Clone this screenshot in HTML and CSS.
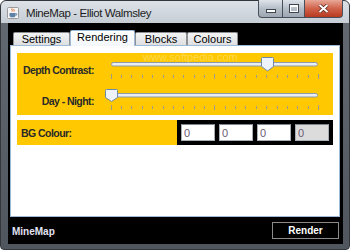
FILE: index.html
```html
<!DOCTYPE html>
<html>
<head>
  <meta charset="UTF-8">
  <title>MineMap</title>
  <link rel="stylesheet" href="styles.css">
</head>
<body>
<div class="window">
  <div class="titlebar">
    <svg class="appicon" width="12" height="12" viewBox="0 0 12 12">
      <rect x="0.5" y="0.5" width="11" height="11" rx="1" fill="#f4f4f4" stroke="#9a9a9a"/>
      <path d="M5 1.5c-1 1 1 1.6 0 3M7 2c-.8.8.8 1.3 0 2.5" stroke="#e0601c" fill="none"/>
      <path d="M2.5 6h6v2.5c0 1-1 1.8-2 1.8h-2c-1 0-2-.8-2-1.8z" fill="#5e81a8"/>
      <path d="M8.5 6.6h.8c.8 0 .8 1.6 0 1.6h-.8" stroke="#5e81a8" fill="none"/>
    </svg>
    <span class="title">MineMap - Elliot Walmsley</span>
    <div class="caps">
      <span class="cbtn min"><i></i></span>
      <span class="cbtn max"><i></i></span>
      <span class="cbtn close">
        <svg width="11" height="9" viewBox="0 0 11 9"><path d="M1.5 1l8 7M9.5 1l-8 7" stroke="#5a2016" stroke-width="3.4"/><path d="M1.5 1l8 7M9.5 1l-8 7" stroke="#fff" stroke-width="2"/></svg>
      </span>
    </div>
  </div>

  <div class="client">
    <div class="tabs">
      <span class="tab t-settings">Settings</span>
      <span class="tab t-rendering selected">Rendering</span>
      <span class="tab t-blocks">Blocks</span>
      <span class="tab t-colours">Colours</span>
    </div>

    <div class="tabpanel">
      <div class="box sliders">
        <label class="lbl">Depth Contrast:</label>
        <svg class="slider" width="218" height="24" viewBox="0 0 218 24">
          <rect x="6.5" y="6.5" width="206" height="3.5" rx="1.7" fill="#e9eef5" stroke="#8e9aa7"/>
          <path class="ticks" d="M6.5 18v5M16.5 19v3M26.5 19v3M37.5 19v3M47.5 19v3M58.5 19v3M68.5 19v3M78.5 19v3M89.5 19v3M99.5 19v3M109.5 18v5M120.5 19v3M130.5 19v3M140.5 19v3M151.5 19v3M161.5 19v3M172.5 19v3M182.5 19v3M192.5 19v3M203.5 19v3M213.5 18v5"/>
          <path class="thumb" d="M157.5 1.5h10q1 0 1 1v8l-6 4.5l-6-4.5v-8q0-1 1-1z"/>
        </svg>

        <label class="lbl">Day - Night:</label>
        <svg class="slider" width="218" height="24" viewBox="0 0 218 24">
          <rect x="6.5" y="6.5" width="206" height="3.5" rx="1.7" fill="#e9eef5" stroke="#8e9aa7"/>
          <path class="ticks" d="M6.5 18v5M16.5 19v3M26.5 19v3M37.5 19v3M47.5 19v3M58.5 19v3M68.5 19v3M78.5 19v3M89.5 19v3M99.5 19v3M109.5 18v5M120.5 19v3M130.5 19v3M140.5 19v3M151.5 19v3M161.5 19v3M172.5 19v3M182.5 19v3M192.5 19v3M203.5 19v3M213.5 18v5"/>
          <path class="thumb" d="M1.5 2.5h10q1 0 1 1v7l-6 4l-6-4v-7q0-1 1-1z"/>
        </svg>
      </div>

      <div class="colour-row">
        <div class="box bg-label"><span class="lbl">BG Colour:</span></div>
        <div class="fields">
          <input class="field" type="text" value="0">
          <input class="field" type="text" value="0">
          <input class="field" type="text" value="0">
          <input class="field off" type="text" value="0">
        </div>
      </div>

      <span class="watermark">www.softpedia.com</span>
    </div>

    <div class="statusbar">
      <span class="brand">MineMap</span>
      <button class="render">Render</button>
    </div>
  </div>
</div>
</body>
</html>
```

FILE: styles.css
```css
html, body {
  margin: 0;
  padding: 0;
  background: #ffffff;
}
body {
  font-family: "Liberation Sans", Arial, sans-serif;
}

.window {
  width: 350px;
  height: 250px;
  box-sizing: border-box;
  display: flex;
  flex-direction: column;
  border: 1px solid #33373c;
  border-radius: 6px 6px 4px 4px;
  background: linear-gradient(#dde2e8 0px, #c6cdd5 22px, #62686f 22px, #50565d 100%);
}

/* title bar */
.titlebar {
  height: 22px;
  display: flex;
  align-items: center;
  padding-left: 6px;
}
.appicon {
  display: block;
  margin-top: 1px;
}
.title {
  margin-left: 7px;
  font-size: 11.5px;
  letter-spacing: -0.4px;
  color: #1c1c1c;
  margin-top: 1px;
}
.caps {
  display: flex;
  margin-left: auto;
  margin-right: 6px;
  align-self: flex-start;
  margin-top: -1px;
}
.cbtn {
  height: 18px;
  box-sizing: border-box;
  border: 1px solid #47505a;
  border-top: none;
  display: flex;
  align-items: center;
  justify-content: center;
  background: linear-gradient(#dfe4ea, #b5bdc6 50%, #9ea7b1);
}
.min {
  width: 25px;
  border-radius: 0 0 0 4px;
}
.max {
  width: 22px;
  border-left: none;
}
.close {
  width: 38px;
  border-left: none;
  border-radius: 0 0 4px 0;
  background: linear-gradient(#e8a898, #d0624a 50%, #b73a20);
}
.min i {
  display: block;
  width: 8px;
  height: 2px;
  margin-top: 5px;
  background: #fff;
  box-shadow: 0 0 0 1px #3c4550;
}
.max i {
  display: block;
  width: 6px;
  height: 4px;
  border: 1px solid #fff;
  border-top-width: 2px;
  box-shadow: 0 0 0 1px #3c4550;
}

/* client area */
.client {
  flex: 1;
  margin: 0 6px 5px 7px;
  background: #000;
  display: flex;
  flex-direction: column;
}

.tabs {
  display: flex;
  align-items: flex-end;
  padding: 7px 0 0 5px;
}
.tab {
  box-sizing: border-box;
  height: 13px;
  border: 1px solid #8d8f92;
  border-bottom: none;
  border-radius: 2px 2px 0 0;
  background: linear-gradient(#f4f4f4, #dedfe1);
  font-size: 11px;
  line-height: 12px;
  text-align: center;
  color: #000;
}
.tab.selected {
  height: 16px;
  margin-bottom: -1px;
  border-color: #9fbad6;
  background: linear-gradient(#ffffff, #f3f7fc);
  position: relative;
  z-index: 1;
}
.t-settings { width: 57px; }
.t-rendering { width: 65px; }
.t-blocks { width: 52px; }
.t-colours { width: 51px; }

.tabpanel {
  position: relative;
  height: 172px;
  box-sizing: border-box;
  margin: 0 3px 0 2px;
  border: 1px solid #9fbad6;
  background: #fff;
  padding: 7px 6px 0 6px;
}

.box {
  background: #ffc800;
}
.lbl {
  font-size: 10.5px;
  font-weight: bold;
  letter-spacing: -0.55px;
  line-height: 12px;
  color: #2a2a2a;
}

.sliders {
  display: grid;
  grid-template-columns: 77px 218px;
  column-gap: 11px;
  row-gap: 7px;
  padding: 3px 0 4px 0;
}
.sliders .lbl {
  text-align: right;
  align-self: end;
  padding-bottom: 4px;
}
.slider {
  display: block;
}
.ticks {
  stroke: #a39a82;
  stroke-width: 1;
  fill: none;
}
.thumb {
  fill: #eef3fa;
  stroke: #6e88a6;
}

.colour-row {
  display: flex;
  margin-top: 5px;
  height: 25px;
}
.bg-label {
  flex: 1;
  display: flex;
  align-items: center;
  padding-left: 4px;
  padding-top: 1px;
}
.fields {
  display: flex;
  gap: 4px;
  padding: 4px;
  background: #000;
}
.field {
  width: 34px;
  height: 17px;
  box-sizing: border-box;
  margin: 0;
  border: 1px solid #a9afb7;
  border-top-color: #7d848d;
  padding: 0 2px;
  font-family: "Liberation Sans", Arial, sans-serif;
  font-size: 11px;
  color: #6a5a72;
  background: #fff;
}
.field.off {
  background: #dcdcdc;
}

.watermark {
  position: absolute;
  left: 132px;
  top: 5px;
  font-size: 11px;
  color: rgba(255, 255, 255, 0.3);
}

/* bottom bar */
.statusbar {
  flex: 1;
  display: flex;
  align-items: center;
  justify-content: space-between;
  padding: 0 4px 0 4px;
}
.brand {
  font-size: 10px;
  font-weight: bold;
  color: #e4e2f5;
  margin-top: 1px;
}
.render {
  width: 67px;
  height: 17px;
  padding: 0;
  border: 1px solid #8a8a8a;
  background: #000;
  color: #fff;
  font-family: "Liberation Sans", Arial, sans-serif;
  font-size: 10px;
  font-weight: bold;
}
```
